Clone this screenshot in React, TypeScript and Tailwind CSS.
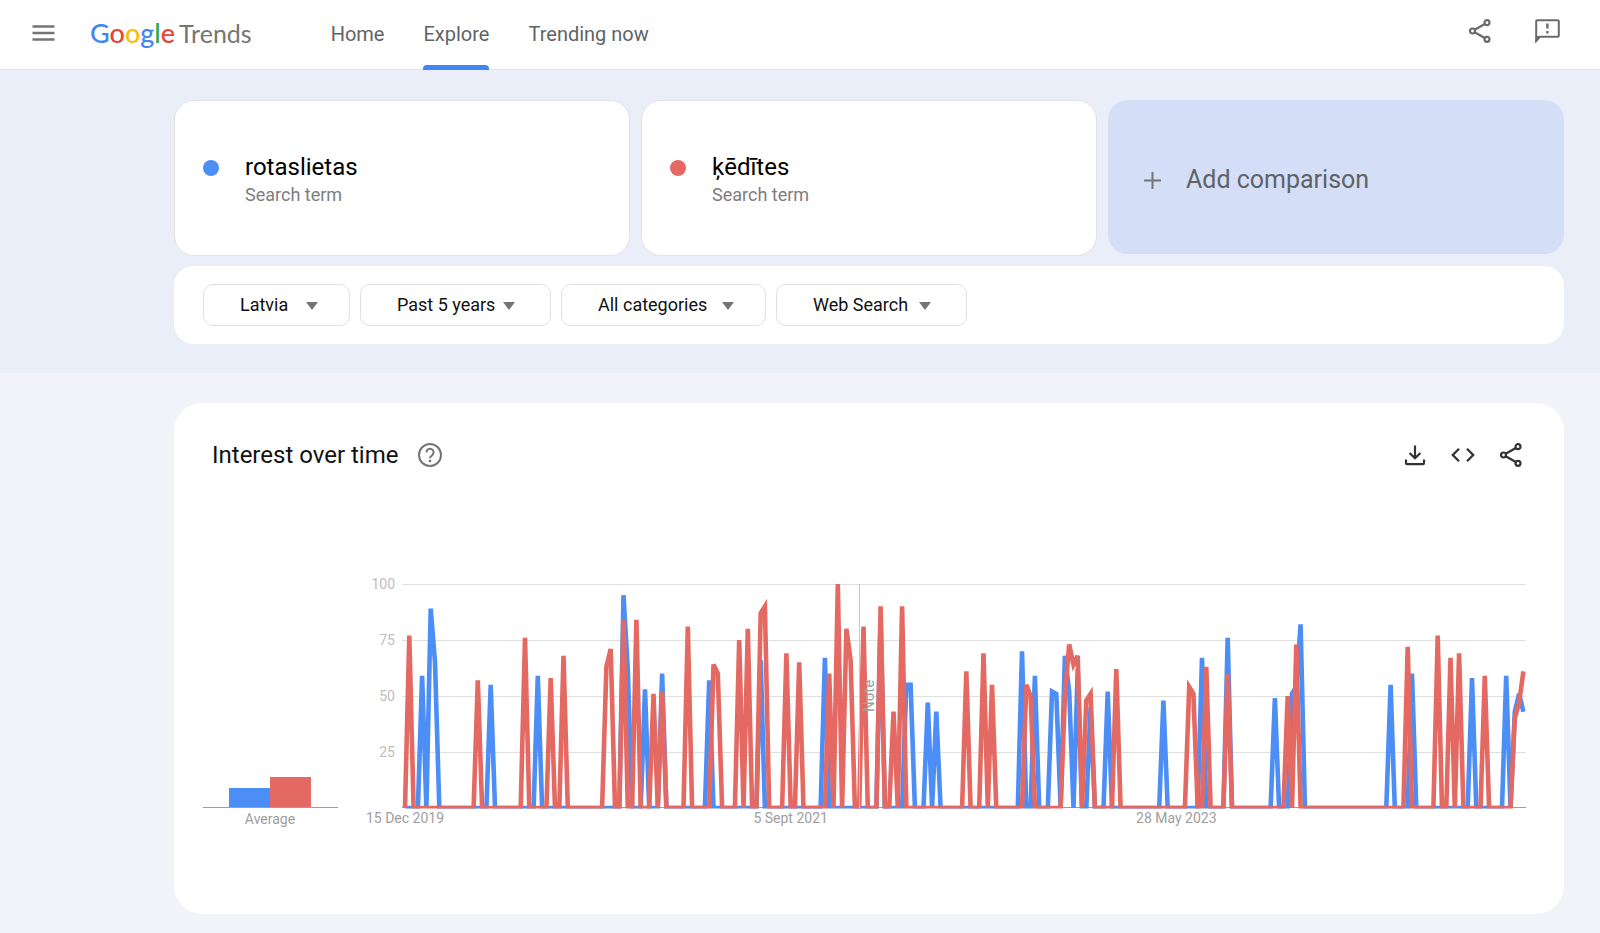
type Series = Record<number, number>;

const WEEKS = 262;

// Weeks that are not listed have a value of 0.
const rotaslietas: Series = {
  4: 59, 6: 89, 7: 65, 20: 55, 31: 59, 51: 95, 52: 62, 56: 53, 60: 60, 71: 57, 83: 66, 98: 67,
  111: 85, 117: 55, 118: 55, 122: 47, 124: 43, 144: 70, 147: 59, 151: 52, 152: 51, 154: 68, 155: 52,
  157: 62, 160: 45, 164: 52, 177: 48, 186: 67, 192: 76, 203: 49, 207: 51, 208: 54, 209: 82, 230: 55,
  235: 60, 249: 58, 257: 59, 259: 43, 260: 51, 261: 43,
};

const kedites: Series = {
  1: 77, 17: 57, 28: 76, 34: 58, 37: 68, 47: 63, 48: 71, 51: 84, 54: 84, 58: 51, 60: 52, 66: 81,
  72: 64, 73: 60, 78: 75, 80: 80, 83: 87, 84: 90, 89: 69, 92: 65, 99: 60, 101: 100, 103: 80, 104: 66,
  107: 81, 111: 90, 114: 43, 116: 90, 131: 61, 135: 69, 137: 55, 145: 55, 146: 50, 154: 50, 155: 73,
  156: 64, 157: 68, 159: 48, 160: 51, 166: 62, 183: 54, 184: 51, 187: 63, 192: 60, 206: 50, 208: 73,
  234: 72, 241: 77, 244: 67, 246: 69, 252: 59, 259: 40, 260: 47, 261: 61,
};

const terms = [
  { name: "rotaslietas", dot: "bg-[#4c8df6]" },
  { name: "ķēdītes", dot: "bg-[#e46962]" },
];

const filters = [
  { label: "Location", value: "Latvia", width: "w-[147px]", arrow: "right-8" },
  { label: "Time range", value: "Past 5 years", width: "w-[191px]", arrow: "right-9" },
  { label: "Category", value: "All categories", width: "w-[205px]", arrow: "right-8" },
  { label: "Search type", value: "Web Search", width: "w-[191px]", arrow: "right-9" },
];

const CHART = { left: 42, top: 14, bottom: 238, step: 4.285 };

const xAt = (week: number) => CHART.left + week * CHART.step;
const yAt = (value: number) => CHART.bottom - (value * (CHART.bottom - CHART.top)) / 100;

function toPoints(series: Series) {
  return Array.from({ length: WEEKS }, (_, i) => `${xAt(i).toFixed(1)},${yAt(series[i] ?? 0).toFixed(1)}`).join(" ");
}

function ShareIcon() {
  return (
    <svg viewBox="0 0 24 24" className="size-6" fill="none" stroke="currentColor" strokeWidth="2.2" aria-hidden="true">
      <circle cx="4.5" cy="12" r="2.5" />
      <circle cx="19" cy="3.7" r="2.5" />
      <circle cx="19" cy="20.3" r="2.5" />
      <path d="M6.7 10.7 16.8 5M6.7 13.3 16.8 19" />
    </svg>
  );
}

function FeedbackIcon() {
  return (
    <svg viewBox="0 0 25 24" className="h-6 w-[25px]" fill="none" aria-hidden="true">
      <path d="M1.2 22V2.2a1 1 0 0 1 1-1h20.6a1 1 0 0 1 1 1v14.6a1 1 0 0 1-1 1H4.8z" stroke="currentColor" strokeWidth="2" />
      <path d="M1 17h4L0 24z" fill="currentColor" />
      <path d="M12.4 4.5v5M12.4 12v2.4" stroke="currentColor" strokeWidth="2.4" />
    </svg>
  );
}

function Header() {
  return (
    <header className="flex h-[70px] items-stretch border-b border-[#e2e3e6] bg-white pr-10 pl-8 text-[#5f6368]">
      <button type="button" aria-label="Main menu" className="flex items-center pb-1">
        <svg viewBox="0 0 24 24" className="size-6" stroke="#757575" strokeWidth="2.5" aria-hidden="true">
          <path d="M.5 5.5h22M.5 12h22M.5 18.5h22" />
        </svg>
      </button>
      <a href="#" className="ml-[34px] flex items-center gap-1 pb-1 font-[Lato,sans-serif]">
        <span className="text-[27px] leading-9 font-medium">
          <span className="text-[#4285f4]">G</span>
          <span className="text-[#ea4335]">o</span>
          <span className="text-[#fbbc05]">o</span>
          <span className="text-[#4285f4]">g</span>
          <span className="text-[#34a853]">l</span>
          <span className="text-[#ea4335]">e</span>
        </span>
        <span className="text-[25px] leading-9 text-[#757575]">Trends</span>
      </a>
      <nav className="ml-[79px] flex gap-[39px] text-xl">
        <a href="#" className="flex items-center pb-0.5">
          Home
        </a>
        <a href="#" aria-current="page" className="relative flex items-center pb-0.5">
          Explore
          <span className="absolute inset-x-0 -bottom-px h-[5px] rounded-t bg-[#4285f4]" />
        </a>
        <a href="#" className="flex items-center pb-0.5">
          Trending now
        </a>
      </nav>
      <div className="ml-auto flex items-center gap-[43px] pb-2 text-[#6b6b6b]">
        <button type="button" aria-label="Share">
          <ShareIcon />
        </button>
        <button type="button" aria-label="Send feedback">
          <FeedbackIcon />
        </button>
      </div>
    </header>
  );
}

function TermCard({ name, dot }: { name: string; dot: string }) {
  return (
    <div className="flex h-39 gap-[26px] rounded-[20px] border border-[#e3e3e6] bg-white px-7 pt-13">
      <span className={`mt-[7px] size-4 shrink-0 rounded-full ${dot}`} />
      <div>
        <p className="text-2xl leading-7 text-black">{name}</p>
        <p className="text-lg leading-7 text-[#7d7d7d]">Search term</p>
      </div>
    </div>
  );
}

function Filters() {
  return (
    <form className="mt-2.5 flex flex-wrap gap-2.5 rounded-[20px] bg-white px-[29px] py-[18px]">
      {filters.map((filter) => (
        <div key={filter.label} className={`relative ${filter.width}`}>
          <select
            aria-label={filter.label}
            className="h-[42px] w-full appearance-none rounded-[10px] border border-[#e0e0e0] bg-white pl-9 text-lg text-[#111]"
          >
            <option>{filter.value}</option>
          </select>
          <svg viewBox="0 0 12 8" className={`pointer-events-none absolute top-[18px] h-2 w-3 ${filter.arrow}`} aria-hidden="true">
            <path d="M0 0h12L6 8z" fill="#757575" />
          </svg>
        </div>
      ))}
    </form>
  );
}

function AverageChart() {
  return (
    <svg viewBox="0 0 135 270" className="w-[135px] shrink-0" role="img" aria-label="Average interest">
      <rect x="26" y="218" width="41" height="20" fill="#4c8df6" />
      <rect x="67" y="207" width="41" height="31" fill="#e46962" />
      <path d="M0 237.5h135" stroke="#9e9e9e" />
      <text x="67" y="254" textAnchor="middle" fontSize="14" fill="#9e9e9e">
        Average
      </text>
    </svg>
  );
}

function TimeChart() {
  return (
    <svg viewBox="0 0 1172 270" className="min-w-0 flex-1" role="img" aria-label="Interest over time">
      <clipPath id="plot">
        <rect x="39" y="14" width="1124" height="224.5" />
      </clipPath>

      {[25, 50, 75, 100].map((value) => (
        <g key={value}>
          <path d={`M39 ${Math.round(yAt(value)) + 0.5}h1124`} stroke="#e0e0e0" />
          <text x="32" y={yAt(value) + 5} textAnchor="end" fontSize="14" fill="#bdbdbd">
            {value}
          </text>
        </g>
      ))}
      <path d="M39 237.5h1124" stroke="#9e9e9e" />

      <g fill="none" strokeWidth="4.6" clipPath="url(#plot)">
        <polyline points={toPoints(rotaslietas)} stroke="#4c8df6" />
        <polyline points={toPoints(kedites)} stroke="#e46962" />
      </g>

      <path d="M496.5 14v224" stroke="#c8c8c8" />
      <text transform="translate(511 142) rotate(-90)" fontSize="15" fill="#9e9e9e">
        Note
      </text>

      <g textAnchor="middle" fontSize="14" fill="#9e9e9e">
        <text x={xAt(0)} y="253">15 Dec 2019</text>
        <text x={xAt(90)} y="253">5 Sept 2021</text>
        <text x={xAt(180)} y="253">28 May 2023</text>
      </g>
    </svg>
  );
}

function InterestCard() {
  return (
    <section className="mt-[30px] mr-9 ml-[174px] rounded-[28px] bg-white pt-[38px] pb-[74px]">
      <div className="flex h-7 items-center pr-[41px] pl-[38px]">
        <h2 className="text-2xl leading-7 text-[#111]">Interest over time</h2>
        <button type="button" aria-label="Help" className="ml-5 text-[#757575]">
          <svg viewBox="0 0 24 24" className="size-6" fill="none" stroke="currentColor" strokeWidth="2" aria-hidden="true">
            <circle cx="12" cy="12" r="11" />
            <path d="M8.4 9.4a3.6 3.6 0 1 1 5.8 2.8c-1.3 1-2.2 1.5-2.2 3" />
            <path d="M12 16.8v2.4" strokeWidth="2.4" />
          </svg>
        </button>
        <div className="ml-auto flex gap-6 text-[#333]">
          <button type="button" aria-label="Download">
            <svg viewBox="0 0 24 24" className="size-6" fill="none" stroke="currentColor" strokeWidth="2.2" aria-hidden="true">
              <path d="M12 2.5v12.5M6.6 10l5.4 5.3 5.4-5.3M3 16.5v3.7a1 1 0 0 0 1 1h16a1 1 0 0 0 1-1v-3.7" />
            </svg>
          </button>
          <button type="button" aria-label="Embed">
            <svg viewBox="0 0 24 24" className="size-6" fill="none" stroke="currentColor" strokeWidth="2.3" aria-hidden="true">
              <path d="M8 5.7 1.8 12 8 18.3M16 5.7l6.2 6.3-6.2 6.3" />
            </svg>
          </button>
          <button type="button" aria-label="Share chart">
            <ShareIcon />
          </button>
        </div>
      </div>
      <div className="mt-[101px] flex items-start gap-[25px] px-[29px]">
        <AverageChart />
        <TimeChart />
      </div>
    </section>
  );
}

export default function App() {
  return (
    <div className="min-h-screen bg-[#f2f3f9] pb-[19px] font-[Roboto,sans-serif]">
      <Header />
      <main>
        <section className="bg-[#e9eef8] pt-[30px] pr-9 pb-[29px] pl-[174px]">
          <div className="grid grid-cols-3 gap-[11px]">
            {terms.map((term) => (
              <TermCard key={term.name} name={term.name} dot={term.dot} />
            ))}
            <button
              type="button"
              className="flex h-[154px] items-center gap-[25px] rounded-[20px] bg-[#d4def6] pt-1.5 pl-9 text-[25px] text-[#5f6368]"
            >
              <svg viewBox="0 0 17 17" className="size-[17px]" stroke="#757575" strokeWidth="2" aria-hidden="true">
                <path d="M0 8.5h17M8.5 0v17" />
              </svg>
              Add comparison
            </button>
          </div>
          <Filters />
        </section>
        <InterestCard />
      </main>
    </div>
  );
}
